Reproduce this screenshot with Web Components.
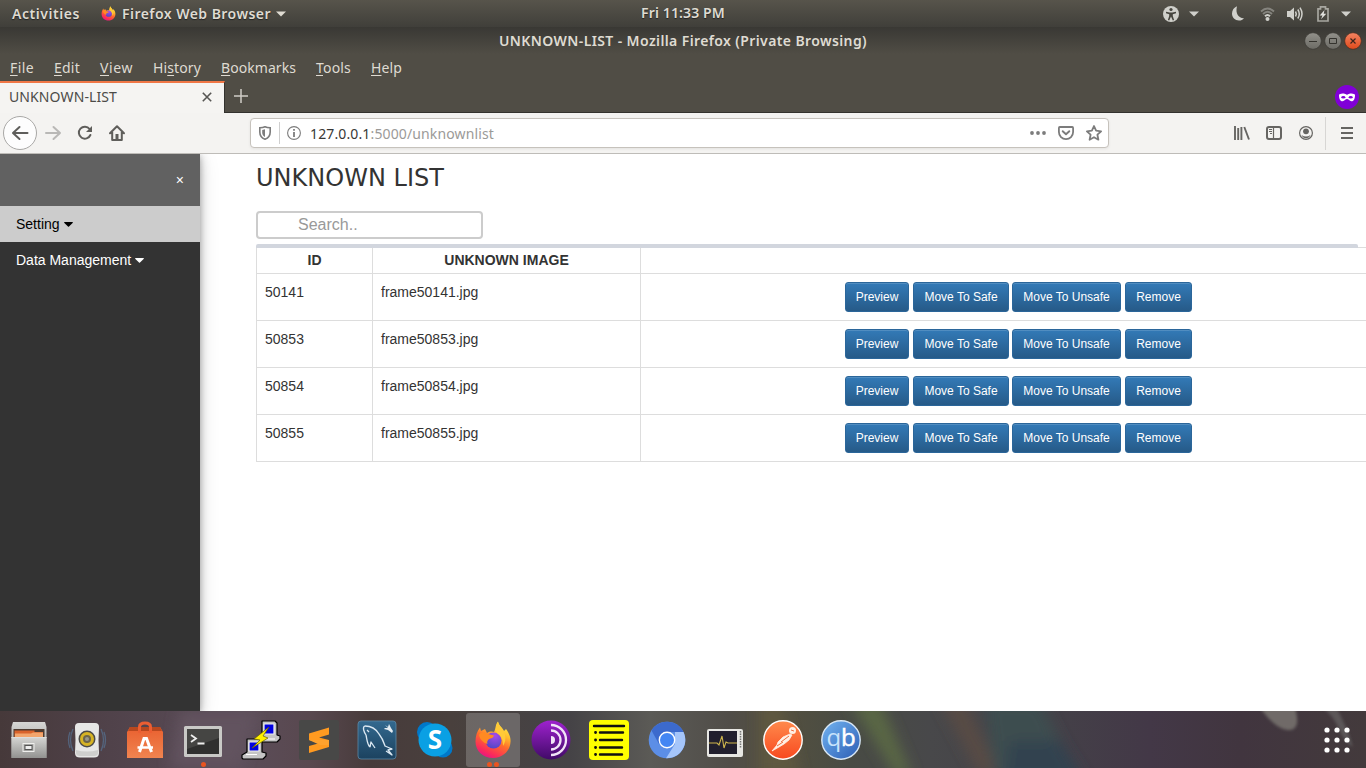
<!DOCTYPE html>
<html lang="en">
<head>
<meta charset="utf-8">
<title>UNKNOWN-LIST</title>
<style>
html,body{margin:0;padding:0;height:100%;overflow:hidden}
body{font-family:"Liberation Sans",Arial,sans-serif}
</style>
</head>
<body>
<desk-top></desk-top>
<script>
function define(name, html, init){
  const tpl=document.createElement('template');
  tpl.innerHTML=html;
  customElements.define(name, class extends HTMLElement{
    connectedCallback(){
      if(this.shadowRoot) return;
      this.attachShadow({mode:'open'}).appendChild(tpl.content.cloneNode(true));
      if(init) init.call(this,this.shadowRoot);
    }
  });
}

/* A one-line label whose tracking is tuned so it occupies the width in "w". */
define('ui-label',`<style>
:host{display:inline-block;white-space:nowrap;font-family:"Noto Sans","Open Sans",sans-serif;flex:none}
span{display:inline-block}
</style><span><slot></slot></span>`,function(root){
  const w=+this.getAttribute('w'), s=root.querySelector('span');
  if(!w) return;
  const n=this.textContent.length, cur=s.getBoundingClientRect().width;
  s.style.letterSpacing=((w-cur)/n)+'px';
  this.style.width=w+'px';
});

const GLYPHS={
  ff:`<svg viewBox="0 0 36 38"><defs><linearGradient id="a" x1=".8" y1="0" x2=".3" y2="1"><stop offset="0" stop-color="#fff14a"/><stop offset=".3" stop-color="#ffbd2e"/><stop offset=".55" stop-color="#ff6b2c"/><stop offset=".85" stop-color="#fb2a5b"/><stop offset="1" stop-color="#e31587"/></linearGradient><radialGradient id="b" cx=".6" cy=".2" r=".8"><stop offset="0" stop-color="#a84be8"/><stop offset="1" stop-color="#5347c8"/></radialGradient></defs><path fill="url(#a)" d="M18 37C8 37 .5 30 .5 20.500C.5 15 2 10 5 6.500L6 10L10 8L12 12C15 10 18 10.500 19 11C21 8 20 4 23 .5C24 5 28 7 29 10L31 8C34 12 36 17 35.500 21C35 30 28 37 18 37z"/><circle cx="18.500" cy="19.500" r="8" fill="url(#b)"/><path fill="#ff8a22" d="M4 14C5 11 9 10 13 13L19 14.500C18.500 17 16 17.500 14 18C12 20 12 21 12.500 23C9 22 5 19 4 14z"/><path fill="#ffca38" d="M23 1C24 6 29 8 30 14C31 18 30 22 28 25C28 18 26 15 22 12C20 8 21 4 23 1z"/></svg>`,
  down:`<svg viewBox="0 0 10 6"><path d="M0 .5h10L5 5.500z" fill="currentColor"/></svg>`,
  access:`<svg viewBox="0 0 16 16"><circle cx="8" cy="8" r="8" fill="#d0d0cb"/><circle cx="8" cy="3.500" r="1.600" fill="#46453f"/><path d="M3 5.800l3.700.6h2.600l3.700-.6v1.500l-3.200.9v1.700l1.300 4-1.300.5L8 10.500l-1.800 3.900-1.300-.5 1.300-4V8.200L3 7.300z" fill="#46453f"/></svg>`,
  moon:`<svg viewBox="0 0 12 15"><path d="M5 .3C2 1.500 0 4.300 0 7.500c0 4 3 7 7 7 2 0 3.800-.8 5-2.300C7 12.500 3 8 5 .3z" fill="#d0d0cb"/></svg>`,
  wifi:`<svg viewBox="0 0 15 14" fill="none" stroke-width="1.800"><path d="M1 4.500Q7.500-1.500 14 4.500M3 7Q7.500 2.500 12 7" stroke="#85847e"/><path d="M5 9.200Q7.500 6.800 10 9.200" stroke="#d0d0cb" stroke-width="2"/><circle cx="7.500" cy="12" r="2" fill="#d0d0cb"/></svg>`,
  vol:`<svg viewBox="0 0 16 14"><path d="M0 4h3l4-3.500v13L3 10H0z" fill="#d0d0cb"/><path d="M8.500 4.500q1.600 2.500 0 5M10.800 2.500q3 4.500 0 9M13 .7q4 6.300 0 12.600" fill="none" stroke="#d0d0cb" stroke-width="1.500"/></svg>`,
  bat:`<svg viewBox="0 0 12 16"><path d="M1 2.800h2.500V.9h5v1.900H11V15H1z" fill="none" stroke="#a7a6a0" stroke-width="1.700"/><path d="M7.500 4L2.700 9.500h2.800L4 13.300l5.300-5.500H6.700z" fill="#e3e3df"/></svg>`,
  min:`<svg viewBox="0 0 18 18"><defs><linearGradient id="m" x2="0" y2="1"><stop stop-color="#92918b"/><stop offset="1" stop-color="#6c6b65"/></linearGradient></defs><circle cx="9" cy="9" r="8.300" fill="url(#m)" stroke="#3b3a35" stroke-width=".7"/><path d="M5 9.500h8" stroke="#34332e"/></svg>`,
  max:`<svg viewBox="0 0 18 18"><defs><linearGradient id="m" x2="0" y2="1"><stop stop-color="#92918b"/><stop offset="1" stop-color="#6c6b65"/></linearGradient></defs><circle cx="9" cy="9" r="8.300" fill="url(#m)" stroke="#3b3a35" stroke-width=".7"/><path d="M5.500 6.500h7v5h-7z" fill="none" stroke="#34332e"/></svg>`,
  close:`<svg viewBox="0 0 18 18"><defs><linearGradient id="c" x2="0" y2="1"><stop stop-color="#f58462"/><stop offset="1" stop-color="#df4a1b"/></linearGradient></defs><circle cx="9" cy="9" r="8.300" fill="url(#c)" stroke="#4b2c20" stroke-width=".7"/><path d="M6.500 6.500l5 5m0-5l-5 5" stroke="#3c241c" stroke-width="1.200"/></svg>`,
  x:`<svg viewBox="0 0 10 10"><path d="M.8.8l8.400 8.400M9.200.8L.8 9.200" stroke="#575654" stroke-width="1.600"/></svg>`,
  plus:`<svg viewBox="0 0 14 14"><path d="M7 0v14M0 7h14" stroke="#cfcdc6" stroke-width="1.500"/></svg>`,
  mask:`<svg viewBox="0 0 24 24"><circle cx="12" cy="12" r="12" fill="#8000d7"/><path fill="#fff" d="M12 10c1.500-1.500 5-2 7.500-.8.500.3.600.8.500 1.500-.3 4-1.500 5.500-3.500 5.500S13.500 14 12 14s-2.500 2.200-4.500 2.200S4.300 14.700 4 10.700c0-.7 0-1.200.5-1.500C7 8 10.500 8.500 12 10z"/><ellipse cx="8.300" cy="12.200" rx="2" ry="1.200" fill="#8000d7"/><ellipse cx="15.700" cy="12.200" rx="2" ry="1.200" fill="#8000d7"/></svg>`,
  back:`<svg viewBox="0 0 34 34"><circle cx="17" cy="17" r="16.500" fill="#fdfdfd" stroke="#a9a8a6"/><path d="M24.500 17H10.500M16.500 11L10 17l6.500 6" fill="none" stroke="#5f5e5b" stroke-width="2" stroke-linecap="round" stroke-linejoin="round"/></svg>`,
  fwd:`<svg viewBox="0 0 16 16"><path d="M1 8h14M8.500 2L15 8l-6.500 6" fill="none" stroke="#b9b8b6" stroke-width="2" stroke-linecap="round" stroke-linejoin="round"/></svg>`,
  reload:`<svg viewBox="0 0 16 16"><path d="M13.400 10A6 6 0 1 1 12.600 4" fill="none" stroke="#5f5e5b" stroke-width="2" stroke-linecap="round"/><path d="M15 1v6H9z" fill="#5f5e5b"/></svg>`,
  home:`<svg viewBox="0 0 16 16"><path d="M1 8.200L8 1.300l7 6.900M3.200 7v8h9.600V7" fill="none" stroke="#5f5e5b" stroke-width="2" stroke-linecap="round" stroke-linejoin="round"/><path d="M6.500 9h3v6h-3z" fill="#5f5e5b"/></svg>`,
  shield:`<svg viewBox="0 0 12 14"><path d="M.8 1.800Q4 1.800 6 .8 8 1.800 11.200 1.800V6c0 3.500-2 6-5.200 7.200C2.800 12 .8 9.500.8 6z" fill="none" stroke="#7c7c7c" stroke-width="1.600"/><path d="M6 3.300L3.200 4v2.500c0 2 1.100 3.600 2.800 4.500z" fill="#7c7c7c"/></svg>`,
  info:`<svg viewBox="0 0 14 14"><circle cx="7" cy="7" r="6.400" fill="none" stroke="#7c7c7c" stroke-width="1.100"/><path d="M7 3v1.800M7 6v5" stroke="#7c7c7c" stroke-width="1.800"/></svg>`,
  dots:`<svg viewBox="0 0 16 4" fill="#7c7c7c"><circle cx="2" cy="2" r="1.900"/><circle cx="8" cy="2" r="1.900"/><circle cx="14" cy="2" r="1.900"/></svg>`,
  pocket:`<svg viewBox="0 0 16 14"><path d="M1.800 1h12.400q.9 0 .9.900V6a7.100 7.100 0 0 1-14.200 0V1.900Q.9 1 1.800 1z" fill="none" stroke="#7c7c7c" stroke-width="1.800"/><path d="M4.700 5.200L8 8.300l3.300-3.100" fill="none" stroke="#7c7c7c" stroke-width="1.900" stroke-linecap="round" stroke-linejoin="round"/></svg>`,
  star:`<svg viewBox="0 0 16 16"><path d="M8 1l2.100 4.700 5 .6-3.700 3.400 1 5L8 12.200l-4.400 2.500 1-5L.9 6.300l5-.6z" fill="none" stroke="#7c7c7c" stroke-width="1.800" stroke-linejoin="round"/></svg>`,
  lib:`<svg viewBox="0 0 16 14"><path d="M1 0v14M4.200 2v12M7.400 1v13M10.300 1L15 13.500" stroke="#666562" stroke-width="1.900"/></svg>`,
  side:`<svg viewBox="0 0 16 14"><rect x="1" y="1" width="14" height="12" rx="2" fill="none" stroke="#666562" stroke-width="2"/><path d="M7.500 1v12" stroke="#666562" stroke-width="1.200"/><path d="M3 3.500h3M3 5.500h3M4 7.500h2" stroke="#666562"/></svg>`,
  user:`<svg viewBox="0 0 14 14"><circle cx="7" cy="7" r="6.400" fill="none" stroke="#666562" stroke-width="1.200"/><circle cx="7" cy="5.300" r="2.900" fill="#666562"/><path d="M2.500 9Q7 12 11.500 9 10 12.300 7 12.300T2.500 9z" fill="#666562"/></svg>`,
  burger:`<svg viewBox="0 0 12 12"><path d="M0 1h12M0 6h12M0 11h12" stroke="#666562" stroke-width="2"/></svg>`,
  caret:`<svg viewBox="0 0 9 5"><path d="M.4 0h8.200q.6.300 0 .9L5 4.600q-.5.400-1 0L.4.900q-.6-.6 0-.9z" fill="currentColor"/></svg>`,

  files:`<svg viewBox="0 0 40 40"><defs><linearGradient id="d" x2="0" y2="1"><stop stop-color="#d6d6d4"/><stop offset="1" stop-color="#929290"/></linearGradient></defs><path d="M4 2h32l1.500 5v31h-35V7z" fill="url(#d)"/><path d="M4.500 9h31v8h-31z" fill="#4e3b30"/><path d="M5.500 10.500h20v1.500H34V17H5.500z" fill="#d9632c"/><path d="M6 13.500h16l2-1h10V17H6z" fill="#f3a56c"/><path d="M2.500 17h35v21h-35z" fill="url(#d)"/><path d="M2.500 17.500h35" stroke="#ddd"/><rect x="14" y="23.500" width="11" height="8" fill="#a4a4a2" stroke="#efefed"/><rect x="16" y="25.500" width="7" height="4" fill="#eee" stroke="#555"/></svg>`,
  rhythm:`<svg viewBox="0 0 40 40"><path d="M6 9q-5 11 0 22M3 12q-3 8 0 16M34 9q5 11 0 22M37 12q3 8 0 16" fill="none" stroke="#55708f" stroke-opacity=".75" stroke-width="1.300"/><path d="M12 3h16q4.500 0 4 5-1 12 0 25 0 4.500-5 4.500H13q-5 0-5-4.500 1-13 0-25-.5-5 4-5z" fill="#e7e7e6"/><path d="M9 30q11 3 22 0v3q0 3-4 3H13q-4 0-4-3z" fill="#cfcfcd"/><circle cx="20" cy="19" r="8.500" fill="#4b4a47"/><circle cx="20" cy="19" r="7" fill="#d6b324"/><circle cx="20" cy="19" r="4" fill="#6b654b"/><circle cx="20" cy="19" r="2" fill="#99978d"/></svg>`,
  soft:`<svg viewBox="0 0 40 40"><defs><linearGradient id="e" x2="0" y2="1"><stop stop-color="#e9602f"/><stop offset="1" stop-color="#f08450"/></linearGradient></defs><path d="M5 7h30l3 5v26H2V12z" fill="url(#e)"/><path d="M5 7h30l2 4H3z" fill="#b8481f"/><path d="M14.500 13V7q0-4 5.500-4t5.500 4v6" fill="none" stroke="#ec5e32" stroke-width="3"/><path d="M14.500 32L19 18.500h2.500l5 13.500" fill="none" stroke="#fff" stroke-width="3"/><path d="M12.500 27.500h15.500" stroke="#fff" stroke-width="2.500"/></svg>`,
  term:`<svg viewBox="0 0 40 40"><rect x="1" y="6" width="38" height="31" rx="1.500" fill="#c9c9c6"/><path d="M4 9h32v25H4z" fill="#30302f"/><path d="M4 9h32v9L4 29z" fill="#454543"/><path d="M8 15l5 3.500L8 22M14.500 23.500h7" fill="none" stroke="#eee" stroke-width="1.800"/></svg>`,
  putty:`<svg viewBox="0 0 40 40" stroke="#000" stroke-width="1.200" stroke-linejoin="round"><path d="M21 1h13l2 2v12l3 1v3l-3 3H19v-5l2-2z" fill="#c5c5c5"/><path d="M23 4h10v10H23z" fill="#0000e0" stroke="#eee"/><path d="M6 19h13l2 2v11l4 1v3l-3 3H2l-1-1v-3l5-3z" fill="#c5c5c5"/><path d="M8 22h10v9H8z" fill="#0000e0" stroke="#eee"/><path d="M5 34.500h11M23 19h11" stroke="#fff"/><path d="M28 7L13 19l6 1-8 8 16-10-5-2z" fill="#fff000" stroke="#665f00" stroke-width=".7"/></svg>`,
  subl:`<svg viewBox="0 0 40 40"><rect width="40" height="40" rx="2" fill="#484847"/><path d="M10 13.500l20-6v7l-10 3 10 2.500v7l-20 6v-7l11-3-11-3z" fill="#ff9a20"/><path d="M10 20l20 0v5l-9 0z" fill="#ffa22e"/></svg>`,
  mysql:`<svg viewBox="0 0 40 40"><defs><linearGradient id="g" x2="0" y2="1"><stop stop-color="#33698f"/><stop offset="1" stop-color="#1c425f"/></linearGradient></defs><rect x="1" y="1" width="38" height="38" rx="3" fill="url(#g)" stroke="#5a88a6" stroke-width=".8"/><path d="M13 27c-3-3-3-8-4-12-2-3-4-8-1-9 6 0 11 3 14 8 4 5 5 9 6 12l7 3-4 1 4 5-6-4M13 27l1-5 4 6M10 10l2 2" fill="none" stroke="#dbe8f2" stroke-width="1.300" stroke-linejoin="round"/><path d="M28 5l3 2 1-3 2 4 2 3-1 2-4-3-4-1 1-1 3 0z" fill="#e5edf3"/></svg>`,
  skype:`<svg viewBox="0 0 40 40"><circle cx="12" cy="12" r="10" fill="#0078ca"/><circle cx="28" cy="28" r="9.500" fill="#0078ca"/><circle cx="20" cy="20" r="16.500" fill="#0aa0e4"/><text x="20" y="29" text-anchor="middle" font-family="Open Sans" font-weight="700" font-size="26" fill="#fff">S</text></svg>`,
  tor:`<svg viewBox="0 0 40 40"><defs><linearGradient id="h" x2="0" y2="1"><stop stop-color="#9e22ce"/><stop offset="1" stop-color="#410a68"/></linearGradient></defs><circle cx="20" cy="20" r="19.500" fill="url(#h)"/><path d="M20 5a15 15 0 0 1 0 30M20 10.500a9.500 9.500 0 0 1 0 19" fill="none" stroke="#f1e4f7" stroke-width="2.300"/><path d="M20 16a4 4 0 0 1 0 8z" fill="#f1e4f7"/></svg>`,
  list:`<svg viewBox="0 0 40 40"><rect width="40" height="40" rx="4" fill="#ff0"/><path d="M5 6h30M11 12.500h23M11 20h22M11 27.500h22M11 34.500h22" stroke="#111" stroke-width="2.400" stroke-linecap="round"/><path d="M6.500 12.500h.1M6.500 20h.1M6.500 27.500h.1M6.500 34.500h.1" stroke="#111" stroke-width="2.800" stroke-linecap="round"/></svg>`,
  chrome:`<svg viewBox="0 0 40 40"><circle cx="20" cy="20" r="18.300" fill="#5c8ee6"/><path d="M4.500 10.500A18.300 18.300 0 0 1 36.500 12H20l-8 12z" fill="#3c6acd"/><path d="M36.500 12A18.300 18.300 0 0 1 19 38.200L28 24V12z" fill="#a5c5fa"/><circle cx="20" cy="20" r="8.400" fill="#fff"/><circle cx="20" cy="20" r="7" fill="#4486f3"/></svg>`,
  monitor:`<svg viewBox="0 0 40 40"><rect x="2" y="9" width="36" height="28" rx="2" fill="#e7e7e3"/><path d="M4 11h28v23H4z" fill="#211f2d"/><path d="M4 23h8l2 2 3-9 2 12 2-6 2 1h9" fill="none" stroke="#cfb64d" stroke-width="1.100"/><path d="M35.500 11v17" stroke="#777" stroke-width="1.500" stroke-dasharray="1.500 1"/></svg>`,
  postman:`<svg viewBox="0 0 40 40"><defs><linearGradient id="i" x2="0" y2="1"><stop stop-color="#ff8a4c"/><stop offset="1" stop-color="#f8491f"/></linearGradient></defs><circle cx="20" cy="20" r="19.200" fill="url(#i)" stroke="#fff" stroke-width="1.400"/><circle cx="29.500" cy="10.500" r="3.500" fill="#fff0e5"/><path d="M27 14L20 17l-5 5-1 3-5 6 7-4 5-3 5-4 3-5z" fill="#fff0e5" stroke="#fff0e5" stroke-width=".8" stroke-linejoin="round"/><path d="M18 22l8-6M14 26l6-4M28 10l3 1" stroke="#ef6b3d"/></svg>`,
  qb:`<svg viewBox="0 0 40 40"><defs><linearGradient id="j" x2="1" y2="1"><stop stop-color="#73b4f1"/><stop offset="1" stop-color="#2b5db4"/></linearGradient></defs><circle cx="20" cy="20" r="19.200" fill="url(#j)" stroke="#d8e7f5" stroke-width="1.400"/><text x="5.500" y="26" font-family="Open Sans" font-size="24" fill="#c9e3fb">q</text><text x="20" y="26" font-family="Open Sans" font-size="24" fill="#fff" stroke="#fff" stroke-width=".5">b</text></svg>`,
  grid:`<svg viewBox="0 0 26 26" fill="#fff"><g id="r"><circle cx="3" cy="3" r="2.600"/><circle cx="13" cy="3" r="2.600"/><circle cx="23" cy="3" r="2.600"/></g><use href="#r" y="10"/><use href="#r" y="20"/></svg>`
};
define('ui-icon',`<style>:host{display:inline-block;flex:none}svg{display:block;width:100%;height:100%;overflow:visible}</style><div style="display:contents"></div>`,function(root){
  root.querySelector('div').innerHTML=GLYPHS[this.getAttribute('name')];
  const [w,h]=this.getAttribute('size').split(' ');
  this.style.width=w+'px';this.style.height=(h||w)+'px';
});

define('top-bar',`<style>
:host{display:grid;grid-template-columns:1fr auto 1fr;align-items:center;height:27px;background:linear-gradient(#57544b,#403f3a);color:#dfdbd2;font-size:14px;font-weight:600;line-height:26px;text-shadow:0 1px 1px #222}
div{display:flex;align-items:center;height:26px}
.l{padding-left:12px}.l ui-icon{margin-right:6px}.l ui-label:first-child{margin-right:21px}.l ui-icon:last-child{margin:0 0 0 5px}
.r{justify-content:flex-end;padding-right:15px;color:#d0d0cb}
.clock{margin-top:-2px}
</style>
<div class="l"><ui-label w="68">Activities</ui-label><ui-icon name="ff" size="15 15"></ui-icon><ui-label w="149">Firefox Web Browser</ui-label><ui-icon name="down" size="10 6"></ui-icon></div>
<ui-label class="clock" w="84">Fri 11:33 PM</ui-label>
<div class="r"><ui-icon name="access" size="16"></ui-icon><ui-icon name="down" size="10 6" style="margin-left:10px"></ui-icon><ui-icon name="moon" size="12 15" style="margin-left:33px"></ui-icon><ui-icon name="wifi" size="15 14" style="margin-left:16px"></ui-icon><ui-icon name="vol" size="16 14" style="margin-left:12px"></ui-icon><ui-icon name="bat" size="12 16" style="margin-left:14px"></ui-icon><ui-icon name="down" size="10 6" style="margin-left:12px"></ui-icon></div>`);

define('title-bar',`<style>
:host{display:grid;grid-template-columns:1fr auto 1fr;align-items:center;height:27px;background:linear-gradient(#393834,#504d45);color:#dfdbd2;font-size:14px;font-weight:600;line-height:27px}
div{grid-column:3;display:flex;justify-content:flex-end;gap:2px;padding-right:4px}
ui-label{grid-column:2}
</style><ui-label w="368">UNKNOWN-LIST - Mozilla Firefox (Private Browsing)</ui-label><div><ui-icon name="min" size="18"></ui-icon><ui-icon name="max" size="18"></ui-icon><ui-icon name="close" size="18"></ui-icon></div>`);

define('menu-bar',`<style>
:host{display:flex;align-items:center;height:27px;padding-left:10px;gap:20px;background:#504d45;color:#dfdbd2;font-size:14px;line-height:27px}
u{text-underline-offset:2px;text-decoration-thickness:1px}
</style><ui-label w="24"><u>F</u>ile</ui-label><ui-label w="26"><u>E</u>dit</ui-label><ui-label w="33"><u>V</u>iew</ui-label><ui-label w="48">Hi<u>s</u>tory</ui-label><ui-label w="75"><u>B</u>ookmarks</ui-label><ui-label w="35"><u>T</u>ools</ui-label><ui-label w="31"><u>H</u>elp</ui-label>`);

define('tab-strip',`<style>
:host{display:flex;align-items:center;height:32px;background:#504d45;border-bottom:1px solid #33322e;box-sizing:border-box;padding-right:7px}
.tab{box-sizing:border-box;width:225px;height:33px;margin-bottom:-2px;border-top:2px solid #f07746;border-right:1px solid #33322e;background:#f5f4f2;display:flex;align-items:center;justify-content:space-between;padding:0 12px 3px 9px;font-size:14px;color:#4c4b48;line-height:28px}
.plus{margin:-2px 0 0 9px;flex:1;display:flex}
</style><div class="tab"><ui-label w="108">UNKNOWN-LIST</ui-label><ui-icon name="x" size="10"></ui-icon></div><div class="plus"><ui-icon name="plus" size="14"></ui-icon></div><ui-icon name="mask" size="24"></ui-icon>`);

define('nav-bar',`<style>
:host{display:flex;align-items:center;height:41px;box-sizing:border-box;background:#f4f3f1;border-bottom:1px solid #bebcb8;padding:0 13px 0 3px}
.url{box-sizing:border-box;width:859px;height:30px;margin-left:125px;border:1px solid #c6c2bc;border-radius:4px;background:#fff;display:flex;align-items:center;padding:0 6px 0 8px;font-size:14px;color:#9b9a98;box-shadow:0 1px 3px #0001;line-height:28px}
.sep{width:1px;height:22px;background:#cfcfcf;margin:0 7px 0 8px}
b{font-weight:400;color:#383836}.grow{flex:1}
.bar{width:1px;height:33px;background:#d7d6d4;margin:0 15px 0 12px}
.url ui-label{margin:1px 0 0 9px}
</style><ui-icon name="back" size="34"></ui-icon><ui-icon name="fwd" size="16" style="margin-left:8px"></ui-icon><ui-icon name="reload" size="16" style="margin-left:16px"></ui-icon><ui-icon name="home" size="16" style="margin-left:16px"></ui-icon>
<div class="url"><ui-icon name="shield" size="12 14"></ui-icon><i class="sep"></i><ui-icon name="info" size="14"></ui-icon><ui-label w="184"><b>127.0.0.1</b>:5000/unknownlist</ui-label><i class="grow"></i><ui-icon name="dots" size="16 4"></ui-icon><ui-icon name="pocket" size="16 14" style="margin-left:12px"></ui-icon><ui-icon name="star" size="16" style="margin-left:12px"></ui-icon></div>
<i class="grow"></i><ui-icon name="lib" size="16 14"></ui-icon><ui-icon name="side" size="16 14" style="margin-left:16px"></ui-icon><ui-icon name="user" size="14" style="margin-left:17px"></ui-icon><i class="bar"></i><ui-icon name="burger" size="12 12"></ui-icon>`);

define('side-menu',`<style>
:host{display:block;width:200px;background:#333;box-shadow:0 2px 10px rgba(0,0,0,.26),0 2px 5px rgba(0,0,0,.16),0 4px 20px rgba(0,0,0,.12);font-size:14px;color:#fff;z-index:1}
div{box-sizing:border-box;height:36px;padding-left:16px;display:flex;align-items:center;gap:4px}
.close{height:52px;background:#616161;justify-content:flex-end;padding-right:16px}
.on{background:#ccc;color:#000}
</style><div class="close">×</div><div class="on"><span>Setting</span><ui-icon name="caret" size="9 5"></ui-icon></div><div><span>Data Management</span><ui-icon name="caret" size="9 5"></ui-icon></div>`);

define('blue-button',`<style>
:host{display:inline-flex;align-items:center;justify-content:center;box-sizing:border-box;height:30px;border:1px solid #2b669a;border-radius:3px;background:linear-gradient(#337ab7,#265a88);box-shadow:inset 0 1px 0 rgba(255,255,255,.15);color:#fff;font-size:12px}
</style><slot></slot>`,function(){this.style.width=this.getAttribute('w')+'px'});

define('list-row',`<style>
:host{display:grid;grid-template-columns:116px 268px 1fr;height:47px;border-bottom:1px solid #ddd;box-sizing:border-box;line-height:20px}
div{border-left:1px solid #ddd;padding:8px;box-sizing:border-box}
.a{display:flex;padding-left:204px}
</style><div><slot name="id"></slot></div><div><slot name="img"></slot></div><div class="a"><blue-button w="64">Preview</blue-button><blue-button w="96" style="margin-left:4px">Move To Safe</blue-button><blue-button w="109" style="margin-left:3px">Move To Unsafe</blue-button><blue-button w="67" style="margin-left:4px">Remove</blue-button></div>`);

define('unknown-page',`<style>
:host{display:block;background:#fff;color:#333;font-size:14px;padding-left:56px;min-width:0}
h1{margin:0;height:57px;font:400 24px/49px "DejaVu Sans",sans-serif}
h1 ui-label{font-family:"DejaVu Sans",sans-serif}
.s{box-sizing:border-box;width:227px;height:28px;border:2px solid #ccc;border-radius:4px;padding-left:40px;font-size:16px;line-height:24px;color:#999}
.bar{height:4px;background:#d2d6de;margin:5px 8px -1px 0;border-radius:2px 2px 0 0;position:relative}
.head{display:grid;grid-template-columns:116px 268px 1fr;height:27px;box-sizing:border-box;border:solid #ddd;border-width:1px 0;font-weight:700;text-align:center;line-height:25px}
.head div{border-left:1px solid #ddd}
</style><h1><ui-label w="188">UNKNOWN LIST</ui-label></h1><div class="s">Search..</div><div class="bar"></div><div class="head"><div>ID</div><div>UNKNOWN IMAGE</div><div></div></div><section></section>`,function(root){
  root.querySelector('section').innerHTML=[50141,50853,50854,50855].map(n=>`<list-row><span slot="id">${n}</span><span slot="img">frame${n}.jpg</span></list-row>`).join('');
});

define('dock-item',`<style>
:host{display:flex;flex-direction:column;align-items:center;width:54px;height:54px;border-radius:3px;padding-top:7px;box-sizing:border-box;margin-right:4px}
:host([active]){background:rgba(255,255,255,.2)}
.dots{display:flex;gap:2.500px;margin-top:2px}
.dots i{width:5px;height:5px;border-radius:50%;background:#e95420}
</style><slot></slot><div class="dots"></div>`,function(root){
  root.querySelector('.dots').innerHTML='<i></i>'.repeat(+this.getAttribute('windows')||0);
});

define('app-dock',`<style>
:host{display:flex;align-items:flex-start;height:57px;box-sizing:border-box;padding:2px 16px 0 2px;position:relative;isolation:isolate;overflow:hidden;background:linear-gradient(90deg,#46393a 0,#50424a 110px,#5b4d59 240px,#59484f 310px,#473b3b 370px,#49403d 450px,#454346 570px,#5b5a56 650px,#504d48 730px,#54503f 780px,#484b44 850px,#48484a 930px,#444148 1050px,#433847 1150px,#41353f 1240px,#433a3c 1366px)}
.sheen{position:absolute;inset:0;z-index:-1;width:1366px;height:57px}
.gap{flex:1}
</style><svg class="sheen" viewBox="0 0 1366 57"><defs><filter id="s" x="-50%" y="-50%" width="200%" height="200%"><feGaussianBlur stdDeviation="7"/></filter><filter id="t" x="-50%" y="-50%" width="200%" height="200%"><feGaussianBlur stdDeviation="1.500"/></filter></defs>
<g filter="url(#s)"><path d="M850-10h30l32 75h-16z" fill="#5a6744"/><path d="M940-10h25l35 75h-20z" fill="#594b45"/><path d="M985-10h55l40 80h-85z" fill="#3d4e50"/><path d="M1010 30h50l25 40h-80z" fill="#324250"/><path d="M180 0h80l-20 57h-70z" fill="#62535f"/><path d="M760-10h20l20 75h-40z" fill="#5f583f"/></g>
<g filter="url(#t)"><path d="M1258-6h36q8 24-4 25-14 1-32-25z" fill="#6f6a68"/><path d="M1322-4h14q10 18 17 40-8-4-14-18t-17-22z" fill="#5c5759"/></g></svg>
<dock-item><ui-icon name="files" size="40"></ui-icon></dock-item><dock-item><ui-icon name="rhythm" size="40"></ui-icon></dock-item><dock-item><ui-icon name="soft" size="40"></ui-icon></dock-item><dock-item windows="1"><ui-icon name="term" size="40"></ui-icon></dock-item><dock-item><ui-icon name="putty" size="40"></ui-icon></dock-item><dock-item><ui-icon name="subl" size="40"></ui-icon></dock-item><dock-item><ui-icon name="mysql" size="40"></ui-icon></dock-item><dock-item><ui-icon name="skype" size="40"></ui-icon></dock-item><dock-item active windows="2"><ui-icon name="ff" size="36 40"></ui-icon></dock-item><dock-item><ui-icon name="tor" size="40"></ui-icon></dock-item><dock-item><ui-icon name="list" size="40"></ui-icon></dock-item><dock-item><ui-icon name="chrome" size="40"></ui-icon></dock-item><dock-item><ui-icon name="monitor" size="40"></ui-icon></dock-item><dock-item><ui-icon name="postman" size="40"></ui-icon></dock-item><dock-item><ui-icon name="qb" size="40"></ui-icon></dock-item><span class="gap"></span><ui-icon name="grid" size="26" style="margin-top:14px"></ui-icon>`);

define('desk-top',`<style>
:host{display:grid;grid-template-rows:27px 27px 27px 32px 41px 557px 57px;width:1366px;height:768px;overflow:hidden}
main{display:grid;grid-template-columns:200px 1fr;overflow:hidden}
</style><top-bar></top-bar><title-bar></title-bar><menu-bar></menu-bar><tab-strip></tab-strip><nav-bar></nav-bar><main><side-menu></side-menu><unknown-page></unknown-page></main><app-dock></app-dock>`);
</script>
</body>
</html>
